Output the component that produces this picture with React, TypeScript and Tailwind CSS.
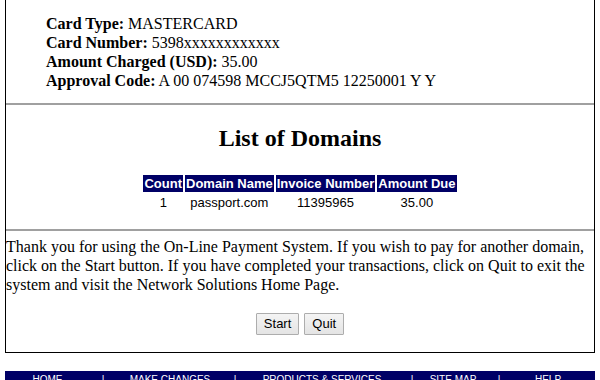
export default function App() {
  const serif = { fontFamily: '"Liberation Serif", "Times New Roman", serif' };
  const rows = [{ count: "1", domain: "passport.com", invoice: "11395965", amount: "35.00" }];

  return (
    <div className="w-[600px] h-[380px] overflow-hidden bg-white text-black" style={serif}>
      <div className="mx-[5px] border-x border-b border-black">
        <div className="pl-[40px] pt-[14px] pb-[13px] text-[16px] leading-[19px]">
          <div>
            <b>Card Type:</b> MASTERCARD
          </div>
          <div>
            <b>Card Number:</b> 5398xxxxxxxxxxxx
          </div>
          <div>
            <b>Amount Charged (USD):</b> 35.00
          </div>
          <div>
            <b>Approval Code:</b> A 00 074598 MCCJ5QTM5 12250001 Y Y
          </div>
        </div>

        <div className="h-[2px] bg-[#a0a0a0]" />

        <div className="pt-[19px] pb-[16px] flex flex-col items-center">
          <h2 className="text-[24px] leading-[28px] font-bold">List of Domains</h2>
          <table
            className="mt-[21px] border-separate border-spacing-[2px] text-[13px] leading-[15px]"
            style={{ fontFamily: '"Liberation Sans", Arial, sans-serif' }}
          >
            <thead>
              <tr className="bg-[#000066] text-white font-bold">
                <th className="px-[1px] py-[1px]">Count</th>
                <th className="px-[1px] py-[1px]">Domain Name</th>
                <th className="px-[1px] py-[1px]">Invoice Number</th>
                <th className="px-[1px] py-[1px]">Amount Due</th>
              </tr>
            </thead>
            <tbody>
              {rows.map((r) => (
                <tr key={r.invoice} className="text-center">
                  <td className="py-[1px]">{r.count}</td>
                  <td className="py-[1px]">{r.domain}</td>
                  <td className="py-[1px]">{r.invoice}</td>
                  <td className="py-[1px]">{r.amount}</td>
                </tr>
              ))}
            </tbody>
          </table>
        </div>

        <div className="h-[2px] bg-[#a0a0a0]" />

        <p className="pt-[6px] text-[16px] leading-[19px]">
          Thank you for using the On-Line Payment System. If you wish to pay for another domain,
          click on the Start button. If you have completed your transactions, click on Quit to
          exit the system and visit the Network Solutions Home Page.
        </p>

        <div
          className="mt-[19px] pb-[17px] flex justify-center gap-[5px] text-[13px]"
          style={{ fontFamily: '"Liberation Sans", Arial, sans-serif' }}
        >
          <button className="h-[22px] px-[7px] border border-[#adadad] bg-gradient-to-b from-[#f4f4f4] to-[#e4e4e4] rounded-[1px]">
            Start
          </button>
          <button className="h-[22px] px-[7px] border border-[#adadad] bg-gradient-to-b from-[#f4f4f4] to-[#e4e4e4] rounded-[1px]">
            Quit
          </button>
        </div>
      </div>

      <div
        className="mx-[5px] mt-[18px] h-[24px] bg-[#000066] text-white text-[10px] leading-[12px] pt-[3px] flex"
        style={{ fontFamily: '"Liberation Sans", Arial, sans-serif' }}
      >
        <span className="w-[85px] text-center">HOME</span>
        <span className="w-[26px] text-center">|</span>
        <span className="w-[108px] text-center">MAKE CHANGES</span>
        <span className="w-[22px] text-center">|</span>
        <span className="w-[152px] text-center">PRODUCTS &amp; SERVICES</span>
        <span className="w-[28px] text-center">|</span>
        <span className="w-[54px] text-center">SITE MAP</span>
        <span className="w-[38px] text-center">|</span>
        <span className="w-[60px] text-center">HELP</span>
      </div>
    </div>
  );
}
